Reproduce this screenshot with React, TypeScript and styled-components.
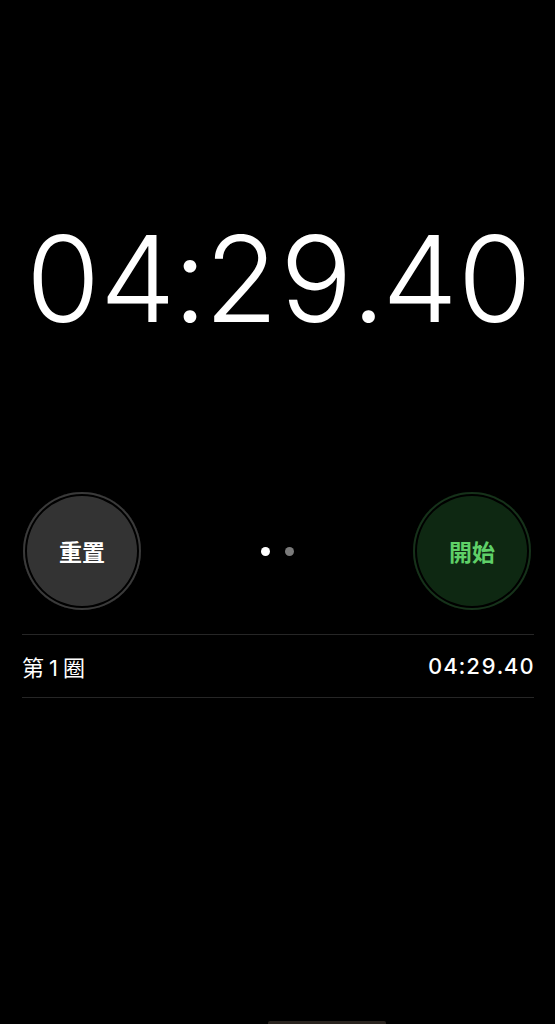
import React from 'react'
import styled, { createGlobalStyle } from 'styled-components'

const GlobalStyle = createGlobalStyle`
    html, body {
        margin: 0;
        padding: 0;
        background: #000000;
    }
    body {
        font-family: Inter, "Noto Sans CJK TC", sans-serif;
        color: #FFFFFF;
    }
`

const Screen = styled.div`
    width: 555px;
    height: 1024px;
    background: #000000;
    display: flex;
    flex-direction: column;
    overflow: hidden;
`

const TimeArea = styled.div`
    height: 490px;
    display: flex;
    align-items: center;
    justify-content: center;
    padding-top: 68px;
    box-sizing: border-box;
`

const BigTime = styled.div`
    font-family: Inter, sans-serif;
    font-weight: 300;
    font-size: 120px;
    font-variant-numeric: tabular-nums;
    letter-spacing: -3px;
    line-height: 1;
`

const Controls = styled.div`
    display: flex;
    align-items: center;
    justify-content: space-between;
    padding: 0 24px 0 23px;
    height: 122px;
`

const RoundButton = styled.button<{ $fill: string; $ring: string; $color: string }>`
    width: 118px;
    height: 118px;
    border-radius: 50%;
    border: none;
    padding: 0;
    background: ${p => p.$fill};
    box-shadow: inset 0 0 0 2px ${p => p.$ring}, inset 0 0 0 4px #000000;
    color: ${p => p.$color};
    font-family: "Noto Sans CJK TC", sans-serif;
    font-weight: 700;
    font-size: 23px;
    display: flex;
    align-items: center;
    justify-content: center;
`

const Pager = styled.div`
    display: flex;
    gap: 15px;
`

const Dot = styled.span<{ $active?: boolean }>`
    width: 9px;
    height: 9px;
    border-radius: 50%;
    background: ${p => (p.$active ? '#FFFFFF' : '#7A7A7A')};
`

const LapList = styled.div`
    margin: 22px 21px 0 22px;
    border-top: 1px solid #262626;
`

const LapRow = styled.div`
    height: 62px;
    display: flex;
    align-items: center;
    justify-content: space-between;
    border-bottom: 1px solid #262626;
`

const LapLabel = styled.span`
    font-family: Inter, "Noto Sans CJK TC", sans-serif;
    font-size: 22px;
    letter-spacing: 5px;
    color: #FFFFFF;
`

const LapTime = styled.span`
    font-family: Inter, sans-serif;
    font-weight: 500;
    font-size: 22px;
    letter-spacing: 1.2px;
    margin-right: -1px;
    font-variant-numeric: tabular-nums;
    color: #FFFFFF;
`

const Spacer = styled.div`
    flex: 1;
`

const HomeBar = styled.div`
    align-self: center;
    width: 118px;
    height: 3px;
    margin-left: 98px;
    border-radius: 2px 2px 0 0;
    background: #2a241f;
`

export default function App() {
    return (
        <Screen>
            <GlobalStyle />
            <TimeArea>
                <BigTime>04:29.40</BigTime>
            </TimeArea>
            <Controls>
                <RoundButton $fill='#333333' $ring='#3A3A3A' $color='#FFFFFF'>重置</RoundButton>
                <Pager>
                    <Dot $active />
                    <Dot />
                </Pager>
                <RoundButton $fill='#0E2812' $ring='#16321A' $color='#5FD068'>開始</RoundButton>
            </Controls>
            <LapList>
                <LapRow>
                    <LapLabel>第1圈</LapLabel>
                    <LapTime>04:29.40</LapTime>
                </LapRow>
            </LapList>
            <Spacer />
            <HomeBar />
        </Screen>
    )
}
